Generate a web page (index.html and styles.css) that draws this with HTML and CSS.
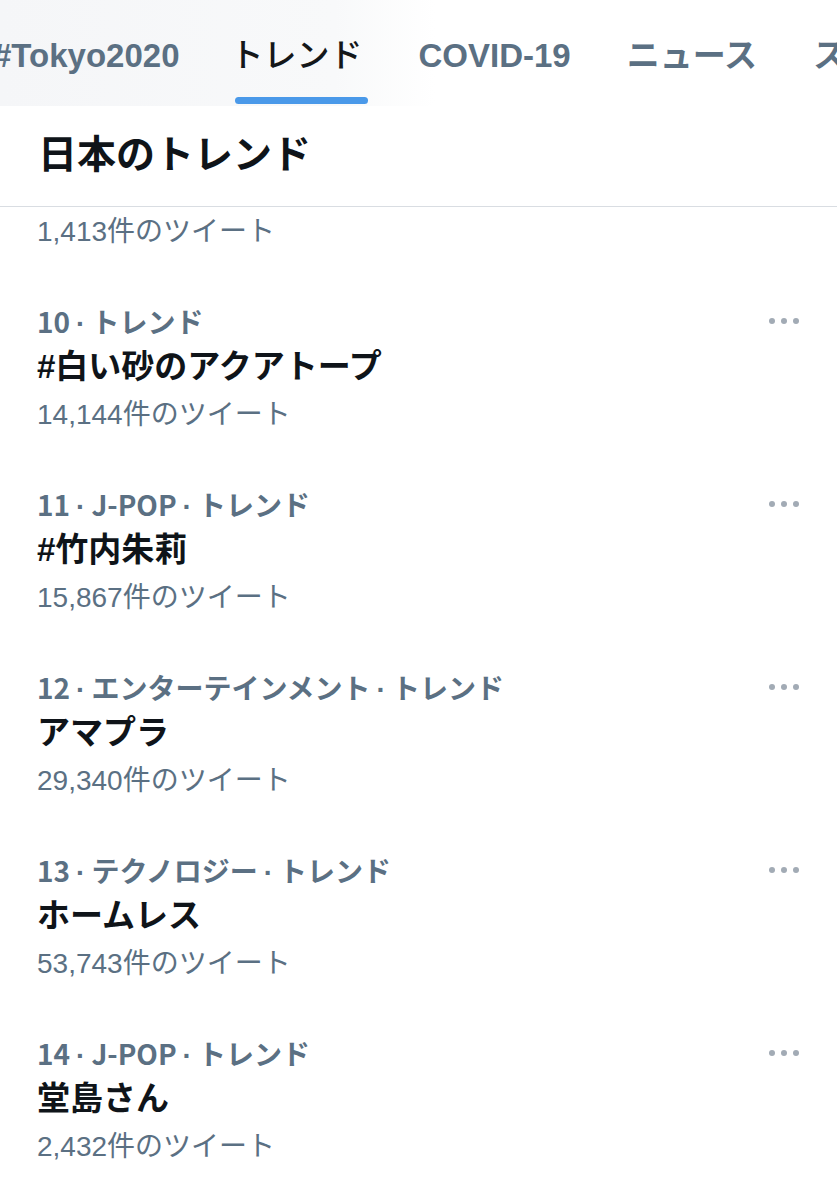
FILE: index.html
```html
<!DOCTYPE html>
<html lang="ja">
<head>
<meta charset="utf-8">
<title>日本のトレンド</title>
<link rel="stylesheet" href="styles.css">
</head>
<body>
<div class="page">
  <nav class="tabs">
    <div class="tab-strip">
      <div class="tab">#Tokyo2020</div>
      <div class="tab active">トレンド</div>
      <div class="tab">COVID-19</div>
      <div class="tab">ニュース</div>
      <div class="tab">スポーツ</div>
    </div>
  </nav>
  <header class="heading">日本のトレンド</header>
  <section class="list">
    <div class="item partial">
      <div class="count">1,413件のツイート</div>
    </div>
    <div class="item">
      <div class="meta">10<span class="sep">·</span>トレンド</div>
      <div class="title">#白い砂のアクアトープ</div>
      <div class="count">14,144件のツイート</div>
      <div class="more"><span></span><span></span><span></span></div>
    </div>
    <div class="item">
      <div class="meta">11<span class="sep">·</span>J-POP<span class="sep">·</span>トレンド</div>
      <div class="title">#竹内朱莉</div>
      <div class="count">15,867件のツイート</div>
      <div class="more"><span></span><span></span><span></span></div>
    </div>
    <div class="item">
      <div class="meta">12<span class="sep">·</span>エンターテインメント<span class="sep">·</span>トレンド</div>
      <div class="title">アマプラ</div>
      <div class="count">29,340件のツイート</div>
      <div class="more"><span></span><span></span><span></span></div>
    </div>
    <div class="item">
      <div class="meta">13<span class="sep">·</span>テクノロジー<span class="sep">·</span>トレンド</div>
      <div class="title">ホームレス</div>
      <div class="count">53,743件のツイート</div>
      <div class="more"><span></span><span></span><span></span></div>
    </div>
    <div class="item">
      <div class="meta">14<span class="sep">·</span>J-POP<span class="sep">·</span>トレンド</div>
      <div class="title">堂島さん</div>
      <div class="count">2,432件のツイート</div>
      <div class="more"><span></span><span></span><span></span></div>
    </div>
  </section>
</div>
</body>
</html>
```

FILE: styles.css
```css
* { box-sizing: border-box; }
html, body {
  margin: 0;
  padding: 0;
  background: #ffffff;
}
body {
  font-family: "Liberation Sans", "Noto Sans CJK JP", sans-serif;
  color: #14171a;
  width: 837px;
  overflow: hidden;
}
.page {
  display: flex;
  flex-direction: column;
}
.tabs {
  height: 106px;
  overflow: hidden;
  background: linear-gradient(90deg, #f5f6f8 0%, #f8f9fa 40%, #ffffff 52%, #ffffff 100%);
}
.tab-strip {
  display: flex;
  margin-left: -35px;
  height: 106px;
}
.tab {
  flex: none;
  position: relative;
  padding: 6px 28px 0 28px;
  font-size: 33px;
  font-weight: 700;
  color: #5b7083;
  line-height: 100px;
  height: 106px;
  white-space: nowrap;
}
.tab.active {
  color: #14171a;
  font-weight: 500;
  padding-left: 23px;
}
.tab.active::after {
  content: "";
  position: absolute;
  left: 27px;
  right: 23px;
  bottom: 2px;
  height: 7px;
  border-radius: 4px;
  background: #4a99e9;
}
.heading {
  height: 101px;
  border-bottom: 1px solid #d9dde2;
  padding-left: 38px;
  font-size: 39px;
  font-weight: 700;
  line-height: 98px;
  color: #0f1419;
}
.list {
  display: flex;
  flex-direction: column;
}
.item {
  position: relative;
  padding: 21px 37px 24px 37px;
  display: flex;
  flex-direction: column;
}
.item.partial {
  padding-top: 0;
}
.meta {
  font-family: "Noto Sans CJK JP", sans-serif;
  font-size: 28px;
  font-weight: 700;
  color: #5b7083;
  line-height: 46px;
  height: 46px;
  white-space: nowrap;
}
.meta .sep {
  font-family: "Liberation Sans", sans-serif;
  font-weight: 700;
  margin: 0 6px;
}
.title {
  font-size: 33px;
  font-weight: 700;
  color: #0f1419;
  line-height: 46px;
  height: 46px;
  white-space: nowrap;
}
.count {
  font-size: 28px;
  font-weight: 400;
  color: #5b7083;
  padding-top: 4px;
  line-height: 42px;
  height: 46px;
  white-space: nowrap;
}
.more {
  position: absolute;
  top: 41px;
  right: 38px;
  display: flex;
  gap: 6px;
}
.more span {
  width: 6px;
  height: 6px;
  border-radius: 50%;
  background: #a2abb5;
}
```
